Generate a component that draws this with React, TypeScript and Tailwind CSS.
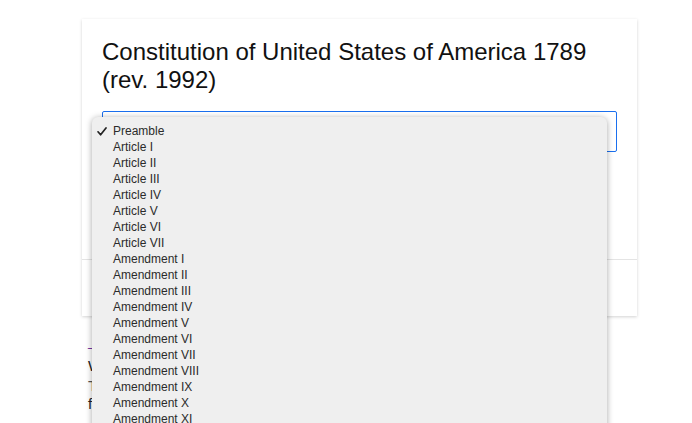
import React from "react";

const items = [
  "Preamble",
  "Article I",
  "Article II",
  "Article III",
  "Article IV",
  "Article V",
  "Article VI",
  "Article VII",
  "Amendment I",
  "Amendment II",
  "Amendment III",
  "Amendment IV",
  "Amendment V",
  "Amendment VI",
  "Amendment VII",
  "Amendment VIII",
  "Amendment IX",
  "Amendment X",
  "Amendment XI",
  "Amendment XII",
  "Amendment XIII",
  "Amendment XIV",
];

export default function App() {
  return (
    <div className="relative w-[692px] h-[423px] overflow-hidden bg-white font-['Liberation_Sans',Arial,sans-serif]">
      <div className="ml-[82px] mt-[19px] w-[555px] bg-white shadow-[0_1px_3px_rgba(0,0,0,0.18)]">
        <div className="px-[20px] pt-[19px] pb-[107px]">
          <h1 className="text-[24px] leading-[28px] text-[#111] font-normal">
            Constitution of United States of America 1789 (rev. 1992)
          </h1>
          <div className="mt-[17px] h-[41px] border border-[#1a6fee] rounded-[2px]" />
        </div>
        <div className="border-t border-[#e4e4e4] h-[57px]" />
      </div>
      <div className="ml-[88px] mt-[20px] text-[15px] leading-[20px] text-[#222] whitespace-nowrap">
        <div className="text-[#6a1b9a] text-[12px] leading-[12px] mb-[8px]">_</div>
        <div>We the People</div>
        <div className="text-[#555]">To form a more perfect Union</div>
        <div className="-mt-[2px]">for the common defence</div>
      </div>
      <div className="absolute left-[92px] top-[117px] w-[515px] h-[330px] bg-[#efefef] rounded-[6px] shadow-[0_1px_6px_rgba(0,0,0,0.35)] pt-[6px] overflow-hidden">
        {items.map((it, i) => (
          <div key={it} className="relative h-[16px] pl-[21px] text-[12px] leading-[16px] text-[#2b2b2b]">
            {i === 0 && (
              <svg className="absolute left-[5px] top-[4px]" width="10" height="9" viewBox="0 0 10 9">
                <path d="M1 4.8 L3.6 7.8 L9 1" fill="none" stroke="#222" strokeWidth="1.7" strokeLinecap="round" strokeLinejoin="round" />
              </svg>
            )}
            {it}
          </div>
        ))}
      </div>
    </div>
  );
}
